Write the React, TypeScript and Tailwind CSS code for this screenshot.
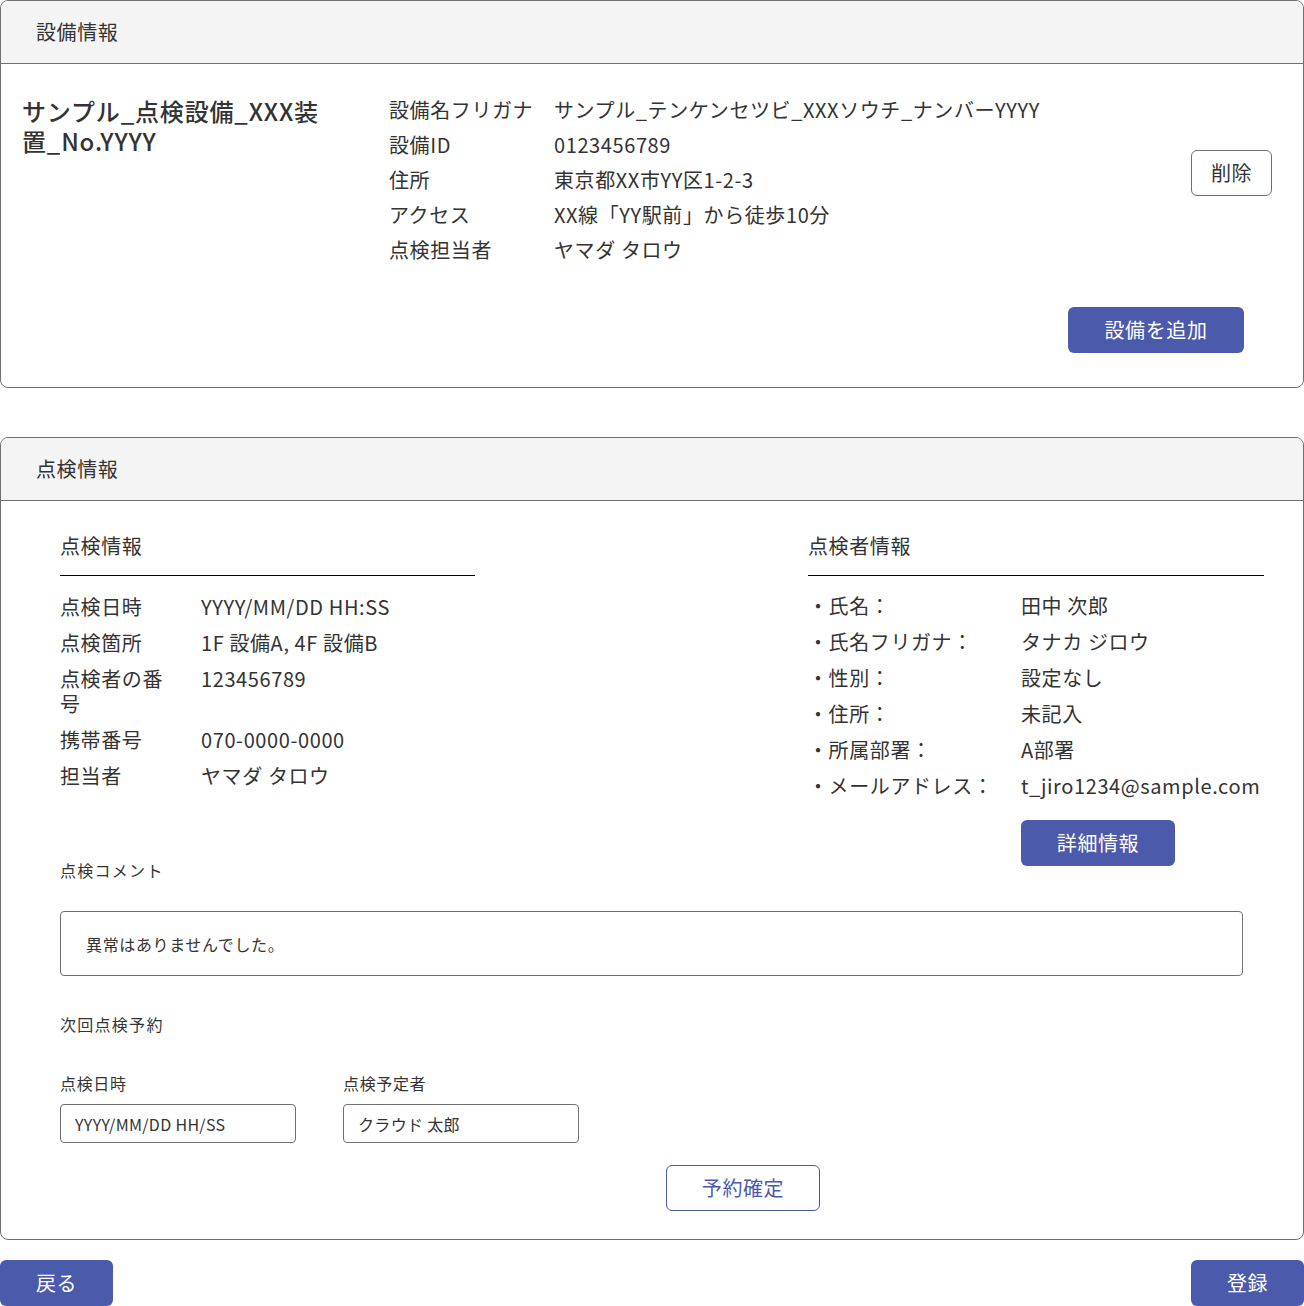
// 設備・点検情報 screen
import type { FC, ReactNode } from 'react';

const font = { fontFamily: '"Noto Sans CJK JP", "Noto Sans", sans-serif' };

const Card: FC<{ title: string; children: ReactNode }> = ({ title, children }) => (
  <section className="rounded-[8px] border border-[#707070] bg-white overflow-hidden">
    <div className="flex h-[63px] items-center border-b border-[#707070] bg-[#f4f4f4] pl-[35px] text-[20px] tracking-[0.03em]">
      {title}
    </div>
    {children}
  </section>
);

const facility = [
  ['設備名フリガナ', 'サンプル_テンケンセツビ_XXXソウチ_ナンバーYYYY'],
  ['設備ID', '0123456789'],
  ['住所', '東京都XX市YY区1-2-3'],
  ['アクセス', 'XX線「YY駅前」から徒歩10分'],
  ['点検担当者', 'ヤマダ タロウ'],
];

const inspection = [
  ['点検日時', 'YYYY/MM/DD HH:SS'],
  ['点検箇所', '1F 設備A, 4F 設備B'],
  ['点検者の番号', '123456789'],
  ['携帯番号', '070-0000-0000'],
  ['担当者', 'ヤマダ タロウ'],
];

const inspector = [
  ['氏名：', '田中 次郎'],
  ['氏名フリガナ：', 'タナカ ジロウ'],
  ['性別：', '設定なし'],
  ['住所：', '未記入'],
  ['所属部署：', 'A部署'],
  ['メールアドレス：', 't_jiro1234@sample.com'],
];

const blueBtn =
  'flex h-[46px] items-center justify-center rounded-[6px] bg-[#4c5aab] text-[20px] tracking-[0.03em] text-white';

export default function App() {
  return (
    <div style={font} className="w-[1304px] text-[#333333]">
      <Card title="設備情報">
        <div className="flex pl-[21px] pr-[31px] pt-[32px]">
          <h1 className="w-[367px] pr-[60px] text-[24px] font-medium leading-[30px] tracking-[0.035em]">
            サンプル_点検設備_XXX装置_No.YYYY
          </h1>
          <div className="grid grid-cols-[165px_auto] gap-y-[11px] pt-[2px] text-[20px] leading-[24px] tracking-[0.03em]">
            {facility.map(([k, v]) => (
              <div key={k} className="contents">
                <div>{k}</div>
                <div>{v}</div>
              </div>
            ))}
          </div>
          <button className="ml-auto mt-[54px] h-[46px] w-[81px] rounded-[6px] border border-[#707070] bg-white text-[20px] tracking-[0.03em]">
            削除
          </button>
        </div>
        <div className="flex justify-end pb-[34px] pr-[59px] pt-[45px]">
          <button className={`${blueBtn} w-[176px]`}>設備を追加</button>
        </div>
      </Card>

      <div className="mt-[49px]">
        <Card title="点検情報">
          <div className="pb-[28px] pl-[59px] pr-[39px] pt-[30px]">
            <div className="flex items-start">
              <div className="w-[415px]">
                <div className="border-b border-black pb-[14px] text-[20px] leading-[30px] tracking-[0.03em]">
                  点検情報
                </div>
                <div className="mt-[18px] grid grid-cols-[141px_auto] gap-y-[11px] text-[20px] leading-[25px] tracking-[0.03em]">
                  {inspection.map(([k, v]) => (
                    <div key={k} className="contents">
                      <div className="pr-[30px]">{k}</div>
                      <div>{v}</div>
                    </div>
                  ))}
                </div>
                <div className="mt-[70px] text-[16px] leading-[24px] tracking-[0.08em]">点検コメント</div>
              </div>
              <div className="ml-auto w-[456px]">
                <div className="border-b border-black pb-[14px] text-[20px] leading-[30px] tracking-[0.03em]">
                  点検者情報
                </div>
                <div className="mt-[18px] grid grid-cols-[213px_auto] gap-y-[12px] text-[20px] leading-[24px] tracking-[0.03em]">
                  {inspector.map(([k, v]) => (
                    <div key={k} className="contents">
                      <div>・{k}</div>
                      <div>{v}</div>
                    </div>
                  ))}
                </div>
                <button className={`${blueBtn} ml-[213px] mt-[22px] w-[154px]`}>詳細情報</button>
              </div>
            </div>

            <div className="mr-[21px] mt-[29px] flex h-[65px] items-center rounded-[4px] border border-[#707070] px-[25px] text-[16px] tracking-[0.04em]">
              異常はありませんでした。
            </div>

            <div className="mt-[36px] text-[16px] leading-[24px] tracking-[0.08em]">次回点検予約</div>

            <div className="mt-[35px] flex gap-[47px]">
              {[
                ['点検日時', 'YYYY/MM/DD HH/SS'],
                ['点検予定者', 'クラウド 太郎'],
              ].map(([label, value]) => (
                <div key={label} className="w-[236px]">
                  <div className="text-[16px] leading-[24px] tracking-[0.04em]">{label}</div>
                  <div className="mt-[9px] flex h-[39px] items-center rounded-[4px] border border-[#707070] px-[14px] text-[16px] tracking-[0.02em]">
                    {value}
                  </div>
                </div>
              ))}
            </div>

            <button className="ml-[606px] mt-[22px] flex h-[46px] w-[154px] items-center justify-center rounded-[6px] border border-[#4c5aab] bg-white text-[20px] tracking-[0.03em] text-[#4c5aab]">
              予約確定
            </button>
          </div>
        </Card>
      </div>

      <div className="mt-[20px] flex justify-between">
        <button className={`${blueBtn} w-[113px]`}>戻る</button>
        <button className={`${blueBtn} w-[113px]`}>登録</button>
      </div>
    </div>
  );
}
